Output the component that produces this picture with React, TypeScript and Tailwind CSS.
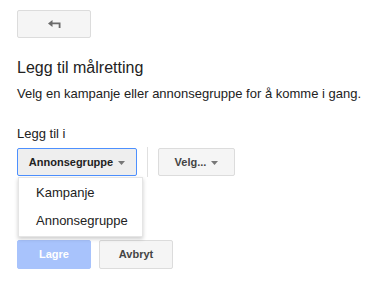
import { useState } from "react";

function Caret() {
  return (
    <svg width="7" height="4" viewBox="0 0 7 4" className="ml-[5px] mt-[1px]">
      <path d="M0 0h7L3.5 4z" fill="#777" />
    </svg>
  );
}

function BackIcon() {
  return (
    <svg width="13" height="8" viewBox="0 0 13 8">
      <path d="M0 3.5L4.5 0v7z" fill="#6b6b6b" />
      <path d="M4 2.5h8.5V8h-1.8V4.3H4z" fill="#6b6b6b" />
    </svg>
  );
}

const grayBtn =
  "h-[28px] rounded-[2px] border border-[#dcdcdc] bg-[#f5f5f5] text-[11px] font-bold text-[#444] flex items-center justify-center";

export default function App() {
  const [open] = useState(true);

  return (
    <div className="min-h-[295px] bg-white pl-[17px] pt-[10px] text-[#222] font-['Liberation_Sans',Arial,sans-serif]">
      <button className={`${grayBtn} w-[74px]`}>
        <BackIcon />
      </button>

      <h1 className="mt-[20px] text-[16px] leading-[20px] font-normal text-[#222]">
        Legg til målretting
      </h1>
      <p className="mt-[8px] text-[13px] leading-[16px]">
        Velg en kampanje eller annonsegruppe for å komme i gang.
      </p>

      <p className="mt-[24px] text-[13px] leading-[16px]">Legg til i</p>

      <div className="mt-[5px] flex items-center">
        <div className="relative">
          <button className="h-[28px] w-[120px] rounded-[2px] border border-[#4d90fe] bg-[#eeeeee] text-[11px] font-bold text-[#222] flex items-center justify-center">
            Annonsegruppe
            <Caret />
          </button>
          {open && (
            <div className="absolute left-[1px] top-full mt-[1px] w-[125px] bg-white border border-[#e5e5e5] shadow-[0_2px_4px_rgba(0,0,0,0.2)] py-[1px] z-10">
              <div className="h-[28px] flex items-center pl-[17px] text-[13px] text-[#222]">
                Kampanje
              </div>
              <div className="h-[28px] flex items-center pl-[17px] text-[13px] text-[#222]">
                Annonsegruppe
              </div>
            </div>
          )}
        </div>
        <div className="ml-[10px] h-[30px] w-px bg-[#e0e0e0]" />
        <button className={`${grayBtn} ml-[10px] w-[77px]`}>
          Velg...
          <Caret />
        </button>
      </div>

      <div className="mt-[63px] flex gap-[8px]">
        <button className="h-[29px] w-[74px] rounded-[2px] border border-[#a8c3fc] bg-[#a8c3fc] text-[11px] font-bold text-white">
          Lagre
        </button>
        <button className={`${grayBtn} h-[29px] w-[74px]`}>Avbryt</button>
      </div>
    </div>
  );
}
